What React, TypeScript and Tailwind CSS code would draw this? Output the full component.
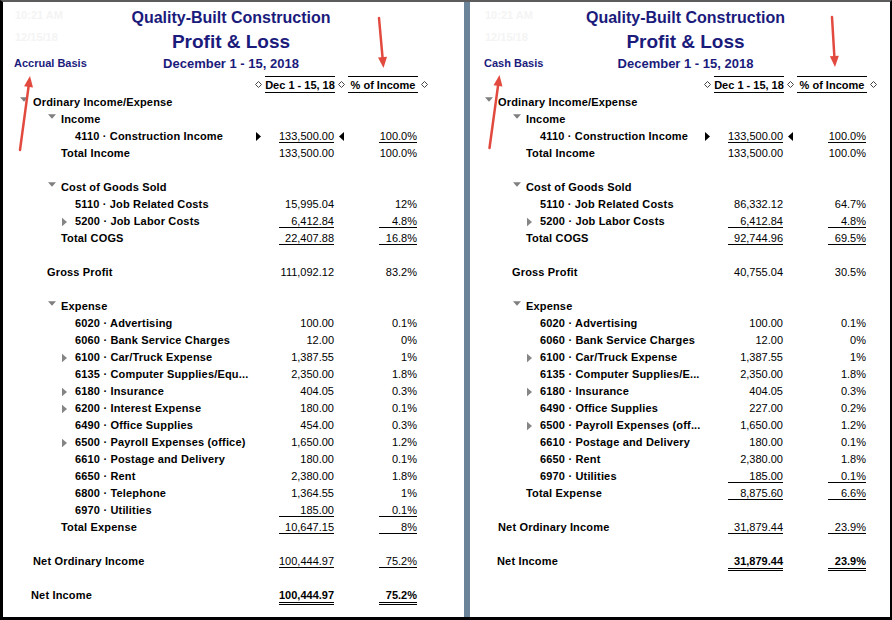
import React from 'react';

// ---------------------------------------------------------------------------
// Types
// ---------------------------------------------------------------------------

type Level = 'l0' | 'l1' | 'l2' | 'gp' | 'noi' | 'ni';

interface Row {
  label?: string;
  level?: Level;
  toggle?: 'down' | 'right';
  amount?: string;
  pct?: string;
  line?: 'single' | 'double';
  selected?: boolean;
  strong?: boolean;
}

interface PanelCfg {
  basis: string;
  labelW: string;
  titlePad: string;
  sidePad: string;
  faintPad: string;
  indent: Record<Level, string>;
  rows: Row[];
}

// ---------------------------------------------------------------------------
// Report data
// ---------------------------------------------------------------------------

const LEFT_ROWS: Row[] = [
  { label: 'Ordinary Income/Expense', level: 'l0', toggle: 'down' },
  { label: 'Income', level: 'l1', toggle: 'down' },
  { label: '4110 · Construction Income', level: 'l2', amount: '133,500.00', pct: '100.0%', line: 'single', selected: true },
  { label: 'Total Income', level: 'l1', amount: '133,500.00', pct: '100.0%' },
  {},
  { label: 'Cost of Goods Sold', level: 'l1', toggle: 'down' },
  { label: '5110 · Job Related Costs', level: 'l2', amount: '15,995.04', pct: '12%' },
  { label: '5200 · Job Labor Costs', level: 'l2', toggle: 'right', amount: '6,412.84', pct: '4.8%', line: 'single' },
  { label: 'Total COGS', level: 'l1', amount: '22,407.88', pct: '16.8%', line: 'single' },
  {},
  { label: 'Gross Profit', level: 'gp', amount: '111,092.12', pct: '83.2%' },
  {},
  { label: 'Expense', level: 'l1', toggle: 'down' },
  { label: '6020 · Advertising', level: 'l2', amount: '100.00', pct: '0.1%' },
  { label: '6060 · Bank Service Charges', level: 'l2', amount: '12.00', pct: '0%' },
  { label: '6100 · Car/Truck Expense', level: 'l2', toggle: 'right', amount: '1,387.55', pct: '1%' },
  { label: '6135 · Computer Supplies/Equ...', level: 'l2', amount: '2,350.00', pct: '1.8%' },
  { label: '6180 · Insurance', level: 'l2', toggle: 'right', amount: '404.05', pct: '0.3%' },
  { label: '6200 · Interest Expense', level: 'l2', toggle: 'right', amount: '180.00', pct: '0.1%' },
  { label: '6490 · Office Supplies', level: 'l2', amount: '454.00', pct: '0.3%' },
  { label: '6500 · Payroll Expenses (office)', level: 'l2', toggle: 'right', amount: '1,650.00', pct: '1.2%' },
  { label: '6610 · Postage and Delivery', level: 'l2', amount: '180.00', pct: '0.1%' },
  { label: '6650 · Rent', level: 'l2', amount: '2,380.00', pct: '1.8%' },
  { label: '6800 · Telephone', level: 'l2', amount: '1,364.55', pct: '1%' },
  { label: '6970 · Utilities', level: 'l2', amount: '185.00', pct: '0.1%', line: 'single' },
  { label: 'Total Expense', level: 'l1', amount: '10,647.15', pct: '8%', line: 'single' },
  {},
  { label: 'Net Ordinary Income', level: 'noi', amount: '100,444.97', pct: '75.2%', line: 'single' },
  {},
  { label: 'Net Income', level: 'ni', amount: '100,444.97', pct: '75.2%', line: 'double', strong: true },
];

const RIGHT_ROWS: Row[] = [
  { label: 'Ordinary Income/Expense', level: 'l0', toggle: 'down' },
  { label: 'Income', level: 'l1', toggle: 'down' },
  { label: '4110 · Construction Income', level: 'l2', amount: '133,500.00', pct: '100.0%', line: 'single', selected: true },
  { label: 'Total Income', level: 'l1', amount: '133,500.00', pct: '100.0%' },
  {},
  { label: 'Cost of Goods Sold', level: 'l1', toggle: 'down' },
  { label: '5110 · Job Related Costs', level: 'l2', amount: '86,332.12', pct: '64.7%' },
  { label: '5200 · Job Labor Costs', level: 'l2', toggle: 'right', amount: '6,412.84', pct: '4.8%', line: 'single' },
  { label: 'Total COGS', level: 'l1', amount: '92,744.96', pct: '69.5%', line: 'single' },
  {},
  { label: 'Gross Profit', level: 'gp', amount: '40,755.04', pct: '30.5%' },
  {},
  { label: 'Expense', level: 'l1', toggle: 'down' },
  { label: '6020 · Advertising', level: 'l2', amount: '100.00', pct: '0.1%' },
  { label: '6060 · Bank Service Charges', level: 'l2', amount: '12.00', pct: '0%' },
  { label: '6100 · Car/Truck Expense', level: 'l2', toggle: 'right', amount: '1,387.55', pct: '1%' },
  { label: '6135 · Computer Supplies/E...', level: 'l2', amount: '2,350.00', pct: '1.8%' },
  { label: '6180 · Insurance', level: 'l2', toggle: 'right', amount: '404.05', pct: '0.3%' },
  { label: '6490 · Office Supplies', level: 'l2', amount: '227.00', pct: '0.2%' },
  { label: '6500 · Payroll Expenses (off...', level: 'l2', toggle: 'right', amount: '1,650.00', pct: '1.2%' },
  { label: '6610 · Postage and Delivery', level: 'l2', amount: '180.00', pct: '0.1%' },
  { label: '6650 · Rent', level: 'l2', amount: '2,380.00', pct: '1.8%' },
  { label: '6970 · Utilities', level: 'l2', amount: '185.00', pct: '0.1%', line: 'single' },
  { label: 'Total Expense', level: 'l1', amount: '8,875.60', pct: '6.6%', line: 'single' },
  {},
  { label: 'Net Ordinary Income', level: 'noi', amount: '31,879.44', pct: '23.9%', line: 'single' },
  {},
  { label: 'Net Income', level: 'ni', amount: '31,879.44', pct: '23.9%', line: 'double', strong: true },
];

const LEFT: PanelCfg = {
  basis: 'Accrual Basis',
  labelW: 'w-[248px]',
  titlePad: 'pr-[5px]',
  sidePad: 'pl-[11px]',
  faintPad: 'pl-[12px]',
  indent: { l0: 'pl-[17px]', l1: 'pl-[45px]', l2: 'pl-[59px]', gp: 'pl-[31px]', noi: 'pl-[17px]', ni: 'pl-[15px]' },
  rows: LEFT_ROWS,
};

const RIGHT: PanelCfg = {
  basis: 'Cash Basis',
  labelW: 'w-[230px]',
  titlePad: 'pl-[11px]',
  sidePad: 'pl-[3px]',
  faintPad: 'pl-[4px]',
  indent: { l0: 'pl-[15px]', l1: 'pl-[43px]', l2: 'pl-[57px]', gp: 'pl-[29px]', noi: 'pl-[15px]', ni: 'pl-[14px]' },
  rows: RIGHT_ROWS,
};

// ---------------------------------------------------------------------------
// Small glyphs
// ---------------------------------------------------------------------------

const Diamond = () => (
  <svg width="7" height="7" viewBox="0 0 7 7">
    <polygon points="3.5,0.5 6.5,3.5 3.5,6.5 0.5,3.5" fill="none" stroke="#444" strokeWidth="1" />
  </svg>
);

const DownTri = () => (
  <svg width="9" height="5" viewBox="0 0 9 5" className="mt-[3px] mr-[5px]">
    <polygon points="0,0 9,0 4.5,5" fill="#7f7f7f" />
  </svg>
);

const RightTri = () => (
  <svg width="6" height="10" viewBox="0 0 6 10" className="mt-[4px] mr-[8px]">
    <polygon points="0,0 6,5 0,10" fill="#858585" />
  </svg>
);

const Mark = ({ dir }: { dir: 'r' | 'l' }) => (
  <svg width="5" height="9" viewBox="0 0 5 9">
    <polygon points={dir === 'r' ? '0,0 5,4.5 0,9' : '5,0 0,4.5 5,9'} fill="#000" />
  </svg>
);

function Arrow({ x1, y1, x2, y2 }: { x1: number; y1: number; x2: number; y2: number }) {
  const dx = x2 - x1;
  const dy = y2 - y1;
  const len = Math.hypot(dx, dy);
  const ux = dx / len;
  const uy = dy / len;
  const bx = x2 - ux * 11;
  const by = y2 - uy * 11;
  const px = -uy * 4.5;
  const py = ux * 4.5;
  return (
    <g>
      <line x1={x1} y1={y1} x2={bx + ux} y2={by + uy} stroke="#e24a3f" strokeWidth="2.5" strokeLinecap="round" />
      <polygon points={`${x2},${y2} ${bx + px},${by + py} ${bx - px},${by - py}`} fill="#e24a3f" />
    </g>
  );
}

// ---------------------------------------------------------------------------
// Report pieces
// ---------------------------------------------------------------------------

function Value({ text, width, line, strong }: { text?: string; width: string; line?: Row['line']; strong?: boolean }) {
  const lineCls =
    line === 'double'
      ? 'h-[16px] border-b-[3px] border-double border-black'
      : line === 'single'
        ? 'h-[13px] border-b border-black'
        : 'h-[13px]';
  return (
    <span className={`mt-[2px] block text-right leading-[12px] ${width} ${lineCls} ${strong ? 'font-bold' : ''}`}>
      {text}
    </span>
  );
}

function ReportRow({ row, p }: { row: Row; p: PanelCfg }) {
  if (!row.label) return <div className="h-[17px]" />;
  return (
    <div className="flex h-[17px]">
      <div className={`flex shrink-0 overflow-visible ${p.labelW} ${p.indent[row.level ?? 'l0']}`}>
        <div className="flex w-[13px] shrink-0 items-start justify-end">
          {row.toggle === 'down' && <DownTri />}
          {row.toggle === 'right' && <RightTri />}
        </div>
        <span className="whitespace-nowrap font-bold leading-[17px] tracking-[0.17px]">{row.label}</span>
      </div>
      <div className="flex w-[14px] shrink-0 items-center justify-center">{row.selected && <Mark dir="r" />}</div>
      <div className="flex w-[70px] shrink-0 justify-end pr-[1px]">
        <Value text={row.amount} width="w-[55px]" line={row.line} strong={row.strong} />
      </div>
      <div className="flex w-[13px] shrink-0 items-center justify-center">{row.selected && <Mark dir="l" />}</div>
      <div className="flex w-[70px] shrink-0 justify-end pr-[1px]">
        <Value text={row.pct} width="w-[38px]" line={row.line} strong={row.strong} />
      </div>
    </div>
  );
}

function Panel({ p, className }: { p: PanelCfg; className: string }) {
  return (
    <div className={`flex flex-col bg-white ${className}`}>
      {/* Title block */}
      <div className={`grid grid-cols-[minmax(0,1fr)_auto_minmax(0,1fr)] pt-[6px] text-[#1b1b7c] ${p.titlePad}`}>
        <span className={`self-start whitespace-nowrap text-[11px] font-bold leading-[15px] text-[#f4f4f4] ${p.faintPad}`}>10:21 AM</span>
        <span className="h-[20px] whitespace-nowrap text-center text-[16px] font-bold leading-[20px]">Quality-Built Construction</span>
        <span />
        <span className={`self-start whitespace-nowrap text-[11px] font-bold leading-[19px] text-[#f4f4f4] ${p.faintPad}`}>12/15/18</span>
        <span className="h-[28px] whitespace-nowrap text-center text-[19px] font-bold leading-[28px]">Profit &amp; Loss</span>
        <span />
        <span className={`self-start whitespace-nowrap text-[11px] font-bold leading-[14px] ${p.sidePad}`}>{p.basis}</span>
        <span className="h-[16px] whitespace-nowrap text-center text-[13px] font-bold leading-[16px]">December 1 - 15, 2018</span>
        <span />
      </div>

      {/* Column header */}
      <div className="mt-[4px] flex h-[17px] font-bold">
        <div className={`shrink-0 ${p.labelW}`} />
        <div className="flex w-[14px] shrink-0 items-center justify-center"><Diamond /></div>
        <div className="w-[70px] shrink-0 whitespace-nowrap border-y border-black text-center leading-[16px]">Dec 1 - 15, 18</div>
        <div className="flex w-[13px] shrink-0 items-center justify-center"><Diamond /></div>
        <div className="w-[70px] shrink-0 whitespace-nowrap border-y border-black text-center leading-[16px]">% of Income</div>
        <div className="flex w-[13px] shrink-0 items-center justify-center"><Diamond /></div>
      </div>

      {/* Rows */}
      <div className="mt-[1px] flex flex-col">
        {p.rows.map((row, i) => (
          <ReportRow key={i} row={row} p={p} />
        ))}
      </div>
    </div>
  );
}

// ---------------------------------------------------------------------------
// App
// ---------------------------------------------------------------------------

export default function App() {
  return (
    <div className="relative h-[620px] w-[892px] overflow-hidden bg-white font-['Liberation_Sans',Arial,sans-serif] text-[11px] text-black">
      <div className="flex h-full w-full border-t-2 border-r-2 border-b-[3px] border-l-[3px] border-t-[#5c5c5c] border-r-black border-b-black border-l-black">
        <Panel p={LEFT} className="w-[461px] shrink-0" />
        <div className="w-[6px] shrink-0 bg-[#6a8399]" />
        <Panel p={RIGHT} className="min-w-0 flex-1" />
      </div>

      {/* annotation arrows */}
      <svg className="pointer-events-none absolute top-0 left-0" width="892" height="620">
        <Arrow x1={20} y1={150} x2={30} y2={76} />
        <Arrow x1={379} y1={18} x2={383.5} y2={68} />
        <Arrow x1={489.5} y1={148} x2={499.5} y2={75} />
        <Arrow x1={832} y1={17} x2={835} y2={67} />
      </svg>
    </div>
  );
}
